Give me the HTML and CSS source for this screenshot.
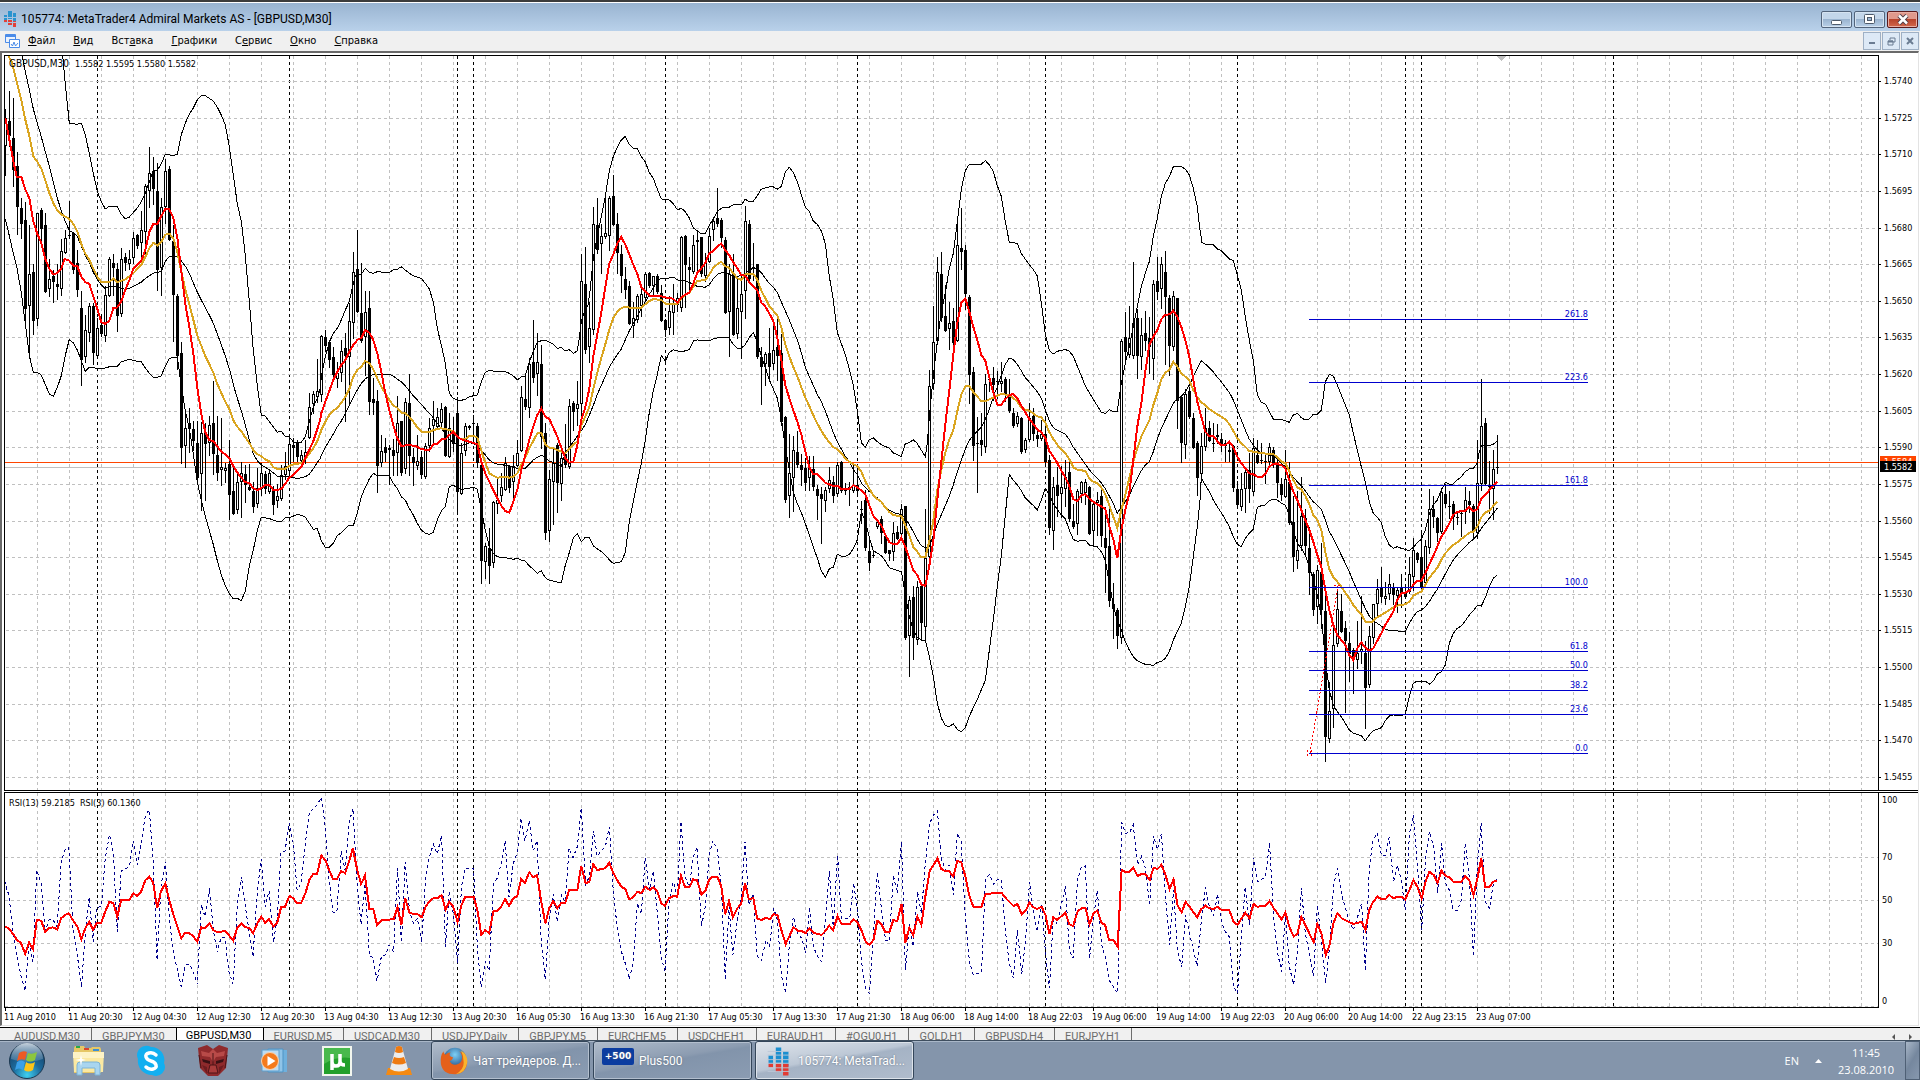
FILE: index.html
```html
<!DOCTYPE html>
<html lang="ru">
<head>
  <meta charset="UTF-8" />
  <meta name="viewport" content="width=device-width, initial-scale=1.0"/>
  <title>105774: MetaTrader4 Admiral Markets AS - [GBPUSD,M30]</title>
  <link rel="stylesheet" href="styles.css">
</head>
<body>
  <div class="window">
    <header class="titlebar">
      <svg class="app-icon" width="12" height="16" viewBox="0 0 12 16">
        <path fill="#2a93cf" d="M0 4h3v5H0zM4 0h4v8H4zM9 2h3v8H9z"/>
        <path fill="#e0413a" d="M0 9h3v2H0zM4 9h4v5H4zM9 10h3v6H9z"/>
        <path stroke="#a9c3df" d="M0 6.5h12M0 11.5h12"/>
      </svg>
      <h1 class="title">105774: MetaTrader4 Admiral Markets AS - [GBPUSD,M30]</h1>
      <div class="win-buttons">
        <button class="win-btn" aria-label="Свернуть">
          <svg width="11" height="11" viewBox="0 0 11 11"><rect x=".5" y="6.5" width="10" height="4" rx="1" fill="#fff" stroke="#4d5a6b"/></svg>
        </button>
        <button class="win-btn" aria-label="Развернуть">
          <svg width="11" height="11" viewBox="0 0 11 11"><rect x=".5" y=".5" width="10" height="9" rx="1" fill="#fff" stroke="#4d5a6b"/><rect x="3.5" y="3.5" width="4" height="3" fill="#9db8d5" stroke="#4d5a6b"/></svg>
        </button>
        <button class="win-btn close" aria-label="Закрыть">
          <svg width="12" height="11" viewBox="0 0 12 11"><path d="M2 1.500l8 8M10 1.500l-8 8" stroke="#4a3a45" stroke-width="4.500"/><path d="M2 1.500l8 8M10 1.500l-8 8" stroke="#fff" stroke-width="2.500"/></svg>
        </button>
      </div>
    </header>

    <nav class="menubar">
      <svg class="doc-icon" width="15" height="15" viewBox="0 0 15 15">
        <path d="M.5.5h10v8H.5z" fill="#eaf2fd" stroke="#4a8be8"/><path d="M1 2h9" stroke="#4a8be8" stroke-width="2"/>
        <path d="M4.500 5.500h10v8h-10z" fill="#fff" stroke="#4a8be8"/><path d="M6 10l1.500 2L9 8l1.500 4L13 9" fill="none" stroke="#4a8be8"/>
      </svg>
      <button class="menu"><u>Ф</u>айл</button>
      <button class="menu"><u>В</u>ид</button>
      <button class="menu">Вст<u>а</u>вка</button>
      <button class="menu"><u>Г</u>рафики</button>
      <button class="menu">С<u>е</u>рвис</button>
      <button class="menu"><u>О</u>кно</button>
      <button class="menu"><u>С</u>правка</button>
      <div class="mdi-buttons">
        <button class="mdi-btn" aria-label="Свернуть график"><svg width="8" height="8"><path d="M1 6h6" stroke="#6b7c92" stroke-width="2"/></svg></button>
        <button class="mdi-btn" aria-label="Восстановить график"><svg width="9" height="9"><path d="M3 3V1h5v4H6M1 4h5v4H1z" fill="none" stroke="#6b7c92"/><path d="M1 4.500h5" stroke="#6b7c92" stroke-width="2"/></svg></button>
        <button class="mdi-btn" aria-label="Закрыть график"><svg width="8" height="8"><path d="M1 1l6 6M7 1L1 7" stroke="#6b7c92" stroke-width="2"/></svg></button>
      </div>
    </nav>

    <main class="chart">
      <svg class="price-pane" id="pricePane"></svg>
      <svg class="rsi-pane" id="rsiPane"></svg>
      <ul class="dates" id="dates"></ul>
    </main>

    <nav class="tabs">
      <button class="tab">AUDUSD,M30</button>
      <button class="tab last">GBPJPY,M30</button>
      <button class="tab active">GBPUSD,M30</button>
      <button class="tab">EURUSD,M5</button>
      <button class="tab">USDCAD,M30</button>
      <button class="tab">USDJPY,Daily</button>
      <button class="tab">GBPJPY,M5</button>
      <button class="tab">EURCHF,M5</button>
      <button class="tab">USDCHF,H1</button>
      <button class="tab">EURAUD,H1</button>
      <button class="tab">#OGU0,H1</button>
      <button class="tab">GOLD,H1</button>
      <button class="tab">GBPUSD,H4</button>
      <button class="tab">EURJPY,H1</button>
      <div class="tab-scroll">
        <button class="scroll-btn" aria-label="Назад"><svg width="4" height="6"><path d="M3 0v6L0 3z" fill="#555"/></svg></button>
        <button class="scroll-btn" aria-label="Вперёд"><svg width="4" height="6"><path d="M1 0v6l3-3z" fill="#555"/></svg></button>
      </div>
    </nav>
  </div>

  <footer class="taskbar">
    <button class="start" aria-label="Пуск">
      <svg width="38" height="38" viewBox="0 0 38 38">
        <defs>
          <radialGradient id="orb" cx=".5" cy=".9" r=".9"><stop offset="0" stop-color="#3fd0f0"/><stop offset=".45" stop-color="#1c6a9c"/><stop offset="1" stop-color="#173a5c"/></radialGradient>
          <linearGradient id="shine" x2="0" y2="1"><stop offset="0" stop-color="#e4edf5" stop-opacity=".85"/><stop offset="1" stop-color="#8fb0cc" stop-opacity=".25"/></linearGradient>
        </defs>
        <circle cx="19" cy="19" r="17.500" fill="url(#orb)" stroke="#1c3850"/>
        <path d="M3 17a16 16 0 0 1 32 0q-16 6-32 0z" fill="url(#shine)"/>
        <path d="M11 11q4-3 8-1l-2 8q-4-2-8 1z" fill="#ee5a24"/>
        <path d="M20 11q4 2 9-1l-2 8q-5 3-9 0z" fill="#8cc63e"/>
        <path d="M9 20q4-3 8 0l-2 8q-4-3-8 0z" fill="#3aa0e8"/>
        <path d="M18 20q4 3 9 0l-2 8q-5 3-9 0z" fill="#fcc419"/>
      </svg>
    </button>
    <button class="pin" aria-label="Проводник">
      <svg width="34" height="32" viewBox="0 0 34 32">
        <path d="M2 3l1-2h9l1 2h6l1-1h8l1 2v24H2z" fill="#e6c766"/>
        <path d="M4 1h4v2H4z" fill="#2aa84a"/><path d="M12 3h5v2h-5z" fill="#d8432e"/><path d="M21 4h6v2h-6z" fill="#3b8fd6"/>
        <path d="M1 7h31l-1 20H2z" fill="#fbe9a2"/><path d="M1 7h31v6H1z" fill="#fdf3c6"/>
        <path d="M5 30V20q0-3 3-3h17q3 0 3 3v10h-5v-7H10v7z" fill="#a9d5ef" stroke="#7cb3d6"/>
        <path d="M9 10l1 4 4 1-4 1-1 5-1-5-5-1 5-1z" fill="#fff"/>
      </svg>
    </button>
    <button class="pin" aria-label="Skype">
      <svg width="32" height="32" viewBox="0 0 32 32">
        <path d="M10 1a9 9 0 0 1 6 1A13 13 0 0 1 29 18a9 9 0 0 1-12 12A14 14 0 0 1 3 14 9 9 0 0 1 10 1z" fill="#12aff0"/>
        <path d="M21 10q-3-3-7-2t-3 4 5 4 5 4-3 4-7-2" fill="none" stroke="#fff" stroke-width="3.500" stroke-linecap="round"/>
      </svg>
    </button>
    <button class="pin" aria-label="Transformers">
      <svg width="32" height="34" viewBox="0 0 32 34">
        <path d="M1 4l9-3 6 4 6-4 9 3-2 20-8 8H11l-8-8z" fill="#8f2a2c"/>
        <path d="M4 7l8 2 4-4 4 4 8-2-1 5-8 1-3 5-3-5-8-1z" fill="#b84a48"/>
        <path d="M5 15l8 2v3l-7-2zM27 15l-8 2v3l7-2z" fill="#3b1114"/>
        <path d="M13 21h6l2 8H11zM2 11l2 13M30 11l-2 13M16 9v12" fill="#a93c3b" stroke="#4d1517"/>
        <path d="M5 21l5 2v7zM27 21l-5 2v7z" fill="#6d1d20"/>
      </svg>
    </button>
    <button class="pin" aria-label="Windows Media Player">
      <svg width="30" height="28" viewBox="0 0 30 28">
        <path d="M12 3h15v22H12z" fill="#6fb0dd"/><path d="M8 2h15v23H8z" fill="#8fc4e8" stroke="#4f93c4"/><path d="M2 3h17v21H2z" fill="#bddcf2" stroke="#5f9fcc"/>
        <circle cx="10" cy="14" r="8.500" fill="#f47a1c" stroke="#fbd3ad"/>
        <path d="M7.500 9l8 5-8 5z" fill="#fff"/>
      </svg>
    </button>
    <button class="pin" aria-label="uTorrent">
      <svg width="30" height="30" viewBox="0 0 30 30">
        <path d="M0 0h30v30H0z" fill="#f2f6ee"/><path d="M2 2h26v26H2z" fill="#22a02b"/><path d="M2 2h26v10Q15 10 2 18z" fill="#48b94c"/>
        <path d="M10 8v8q0 4 4 4t4-4V8M18 15q0 4 5 4M10 16v8" fill="none" stroke="#fff" stroke-width="3.500"/>
      </svg>
    </button>
    <button class="pin" aria-label="VLC">
      <svg width="28" height="32" viewBox="0 0 28 32">
        <path d="M3 23h22l2 7H1z" fill="#f58a12"/><path d="M11 2q3-2 6 0l6 22q-9 5-18 0z" fill="#ececec"/>
        <path d="M11 2q3-2 6 0l1 5q-4 2-8 0zM9 12q5 2 10 0l2 6q-7 3-14 0z" fill="#ee7a10"/>
      </svg>
    </button>

    <button class="task first">
      <svg width="34" height="34" viewBox="0 0 32 32">
        <defs><radialGradient id="globe" cx=".5" cy=".3" r=".7"><stop offset="0" stop-color="#7cd0f7"/><stop offset="1" stop-color="#12356f"/></radialGradient></defs>
        <circle cx="17" cy="14" r="13" fill="url(#globe)"/>
        <path d="M4 5q0 3 2 4 3-3 6-3-2 3 0 5l3 1q-1 3-4 4 2 5 8 4 5-1 6-6 1-5-3-9 8 3 9 12-1 13-14 14Q3 31 1 19 0 10 4 5z" fill="#e5601a"/>
        <path d="M24 4q8 5 7 14-2 12-13 13 9-5 9-13 0-8-3-14z" fill="#fbb32b"/>
      </svg>
      <span>Чат трейдеров. Д...</span>
    </button>
    <button class="task">
      <span class="plus500">+500</span>
      <span>Plus500</span>
    </button>
    <button class="task current">
      <svg width="34" height="34" viewBox="0 0 32 32">
        <path d="M5 10h5v9H5zM13 1h6v17h-6zM21 5h6v17h-6z" fill="#1b8fd0"/>
        <path d="M5 19h5v4H5zM13 19h6v9h-6zM21 19h6v13h-6z" fill="#e23b33"/>
        <path d="M4 14.500h24M4 18.500h24M4 23.500h24M4 9.500h24M4 5.500h24M4 27.500h24" stroke="#bcc7d6"/>
      </svg>
      <span>105774: MetaTrad...</span>
    </button>

    <div class="tray">
      <span class="lang">EN</span>
      <button class="tray-up" aria-label="Скрытые значки"><svg width="7" height="4"><path d="M0 4h7L3.500 0z" fill="#fff"/></svg></button>
      <time class="clock" datetime="2010-08-23T11:45"><span>11:45</span><span>23.08.2010</span></time>
      <button class="peek" aria-label="Показать рабочий стол"></button>
    </div>
  </footer>
  <script src="chart.js"></script>
</body>
</html>
```
FILE: styles.css
```css
* {
  box-sizing: border-box;
}
body {
  margin: 0;
  height: 100vh;
  display: flex;
  flex-direction: column;
  overflow: hidden;
  font-family: "DejaVu Sans Condensed", "DejaVu Sans", sans-serif;
  font-size: 11px;
  color: #000;
}
button {
  font: inherit;
  margin: 0;
  padding: 0;
  border: 0;
  background: none;
}
svg {
  display: block;
}

/* window frame */
.window {
  flex: 1;
  min-height: 0;
  display: flex;
  flex-direction: column;
  background: #fff;
  border-top: 2px solid #3c3c3c;
}
.titlebar {
  height: 29px;
  display: flex;
  align-items: center;
  gap: 5px;
  padding: 4px 2px 0 4px;
  border-top: 1px solid #fff;
  background: linear-gradient(#99b4d1, #b9d1ea);
}
.title {
  flex: 1;
  margin: 0;
  font-family: Roboto, "Noto Sans", sans-serif;
  font-size: 12px;
  font-weight: normal;
}
.win-buttons {
  display: flex;
  gap: 2px;
}
.win-btn {
  width: 31px;
  height: 17px;
  display: flex;
  align-items: center;
  justify-content: center;
  border: 1px solid #52647c;
  border-radius: 2px;
  background: linear-gradient(#c3d6ea 45%, #9ab4d0 50%, #b9d0e8);
  box-shadow: inset 0 0 0 1px #d5e3f1;
}
.win-btn.close {
  border-color: #5a1a1c;
  background: linear-gradient(#e0998c 45%, #b8442c 50%, #d2684d);
  box-shadow: inset 0 0 0 1px #e8aea4;
}
.menubar {
  height: 20px;
  display: flex;
  align-items: center;
  gap: 18px;
  padding: 0 1px 0 5px;
  background: #f0f0f0;
}
.doc-icon {
  margin-right: -10px;
}
.menu {
  line-height: 20px;
}
.mdi-buttons {
  display: flex;
  gap: 1px;
  margin-left: auto;
}
.mdi-btn {
  width: 18px;
  height: 18px;
  display: flex;
  align-items: center;
  justify-content: center;
  border: 1px solid #9fb0c4;
  background: #dde9f6;
}

/* chart */
.chart {
  flex: 1;
  min-height: 0;
  display: flex;
  flex-direction: column;
  margin-right: 1px;
  border-top: 2px solid #696969;
  border-left: 2px solid #696969;
  border-right: 1px solid #e3e3e3;
  border-bottom: 1px solid #e3e3e3;
}
.price-pane {
  flex: 1;
  min-height: 0;
  width: 100%;
}
.rsi-pane {
  flex: none;
  width: 100%;
  height: 220px;
}
.dates {
  display: flex;
  height: 14px;
  margin: 0;
  padding: 0 0 0 2px;
  list-style: none;
  overflow: hidden;
}
.dates li {
  flex: none;
  width: 64px;
  line-height: 12px;
  font-size: 9px;
  white-space: nowrap;
}
.chart text {
  font-size: 9px;
}
.chart .symbol {
  font-size: 10px;
}
.grid {
  stroke: #c0c0c0;
  stroke-dasharray: 3 3;
}
.day {
  stroke: #000;
  stroke-dasharray: 3 3;
}
.frame {
  stroke: #000;
}
.bid {
  stroke: #c0c0c0;
}
.ask {
  stroke: #ff4500;
}
.fibo {
  stroke: #0000cd;
}
.chart .fibo-label {
  fill: #0000cd;
  text-anchor: end;
}
.trend {
  stroke: #f00;
  stroke-dasharray: 2 2;
}
.band,
.fast,
.slow,
.rsi3,
.rsi13 {
  fill: none;
  stroke: #000;
}
.fast,
.rsi13 {
  stroke: #f00;
  stroke-width: 2;
}
.slow {
  stroke: #daa520;
  stroke-width: 2;
}
.rsi3 {
  stroke: #00008b;
  stroke-dasharray: 3 3;
}
.bull {
  fill: #fff;
  stroke: #000;
}
.ask-tag {
  fill: #ff4500;
}
.chart .tag-text {
  fill: #fff;
}
.shift {
  fill: #c0c0c0;
}

/* chart tabs */
.tabs {
  flex: none;
  height: 13px;
  display: flex;
  overflow: hidden;
  margin-top: 1px;
  padding-left: 4px;
  background: #f0f0f0;
  border-top: 1px solid #000;
}
.tab {
  height: 18px;
  padding: 0 11px 0 10px;
  color: #6d6d6d;
  font-family: Roboto, "DejaVu Sans Condensed", sans-serif;
  line-height: 18px;
  border-right: 1px solid #6d6d6d;
}
.tab.last {
  border-right: 0;
}
.tab.active {
  margin-top: -1px;
  padding: 0 11px 0 9px;
  color: #000;
  background: #fff;
  border-left: 1px solid #000;
  border-right: 1px solid #000;
}
.tab-scroll {
  display: flex;
  gap: 12px;
  margin-left: auto;
  padding: 6px 8px 0 0;
}
.scroll-btn {
  height: 6px;
}

/* taskbar */
.taskbar {
  flex: none;
  height: 40px;
  display: flex;
  align-items: center;
  padding-left: 8px;
  border-top: 1px solid #3f4f60;
  background: #8495ab;
  box-shadow: inset 0 1px #a9b7c8;
  color: #fff;
  font-family: "Open Sans", "Noto Sans", sans-serif;
}
.start {
  width: 50px;
}
.pin {
  width: 62px;
  display: flex;
  justify-content: center;
}
.task {
  width: 159px;
  height: 39px;
  margin-right: 3px;
  padding: 0 8px;
  display: flex;
  align-items: center;
  gap: 5px;
  color: #fff;
  font-family: Roboto, "Noto Sans", sans-serif;
  font-size: 12px;
  white-space: nowrap;
  border: 1px solid #34465a;
  border-radius: 3px;
  background: linear-gradient(170deg, #b0bccb, #8c9cb1 45%, #8294ab 50%, #8b9cb2);
  box-shadow: inset 0 0 0 1px #b3bfce;
}
.task.first {
  margin-left: 1px;
}
.task.current {
  background: linear-gradient(170deg, #dfe5ec, #bcc7d5 45%, #a5b3c5 50%, #b0bccc);
  box-shadow: inset 0 0 0 1px #dde3ea;
}
.task span {
  text-shadow: 0 0 2px #5d6b7d;
}
.task .plus500 {
  width: 32px;
  height: 17px;
  margin-top: -8px;
  border-radius: 2px;
  background: #0b3ca0;
  font: bold 9px/16px "DejaVu Sans", sans-serif;
  text-align: center;
}
.tray {
  height: 100%;
  margin-left: auto;
  display: flex;
  align-items: center;
  font-size: 11px;
}
.lang {
  margin-right: 16px;
}
.tray-up {
  margin-right: 17px;
}
.clock {
  width: 54px;
  display: flex;
  flex-direction: column;
  align-items: center;
  line-height: 17px;
  margin-right: 12px;
}
.peek {
  width: 15px;
  height: 100%;
  border: 1px solid #4f6075;
  background: linear-gradient(120deg, #a9b7c8, #75879e 50%, #8798ae);
}
```
FILE: chart.js
```js
// Quotes are packed in blocks. Every block has its own origin and scale:
// screen y = y + value / sy, screen x = x + value / sx.
// A bar is "high open close low"; one bar takes 4px.
const BAR = 4;
const FIRST_BAR = 5;
const ORIGIN_X = 2;
const ORIGIN_Y = 53;
const RSI_Y = 791;

const blocks = [
  {
    x: 0, y: 50, sx: 3, sy: 2.8,
    bars: `165 270 190 350,115 200 240 270,135 245 335 382,285 325 440 515,415 443 487 525,425 475 725 770,490 718 628 860,
      600 622 758 795,455 752 457 770,443 448 500 540,455 490 677 677,585 670 642 690,615 633 650 705,600 655 663 697,
      530 670 562 685,505 567 525 567,423 517 520 527,510 512 615 625,560 595 672 690,675 722 868 937,742 860 785 873,
      708 793 717 815,708 717 848 880,750 857 778 857,738 770 795 800,660 800 685 815,580 690 585 690,570 595 610 685,
      595 612 745 787,553 738 585 745,568 580 595 615,560 600 585 612,510 582 525 595,515 518 548 553,450 540 505 585,
      375 510 380 580,272 395 345 440,300 340 388 430,315 395 615 672,415 610 440 685,305 440 340 485,325 333 533 533,
      490 535 685 815,683 690 858 893,818 847 1113 1155,1010 1108 1058 1168,1003 1045 1060 1125,1040 1062 1095 1120,
      1040 1100 1197 1215,1042 1187 1073 1287,1045 1073 1102 1260,1025 1100 1050 1135,928 1045 1130 1187,1025 1135 1183 1203,
      1030 1175 1168 1217,1155 1180 1170 1210,1092 1160 1245 1312,1158 1235 1298 1300,1185 1287 1210 1295,1153 1210 1185 1307,
      1163 1188 1217 1265,1160 1223 1232 1233,1210 1235 1280 1293,1170 1272 1225 1280,1155 1230 1183 1245,1178 1187 1230 1240,
      1175 1237 1185 1240,1220 1235 1273 1298,1215 1263 1248 1280,1162 1258 1190 1260,1125 1190 1165 1200,1075 1180 1102 1190,
      1085 1105 1113 1150,1092 1098 1140 1150,1120 1150 1135 1158`,
    upper: `188,15 196,95 208,205 232,208 244,205 256,237 268,290 280,345 292,395 304,425 316,445 328,438 352,438 364,460 376,473 388,468 400,455 412,442 424,425 436,400 448,370 460,338 472,337 484,318 496,292 520,295 532,292 544,237 556,205 568,180 580,162 592,140 604,127 616,128 640,143 652,160 664,182 676,210 688,270 700,350 712,430 724,480 736,575 748,705 760,840 772,940 784,1022 796,1025 808,1040 820,1055 832,1070 844,1068 856,1082 868,1083 880,1097 892,1100 904,1098 916,1083 928,1040 940,1000 952,975 960,950`,
    mid: `66,15 76,60 88,110 100,165 112,205 124,243 136,285 148,325 160,370 172,415 184,450 196,480 208,505 220,512 232,522 244,548 256,575 268,595 280,622 292,643 304,658 316,668 328,662 352,663 376,670 388,667 400,662 424,650 436,640 460,625 484,620 496,592 508,578 532,578 544,590 556,605 568,625 580,652 592,678 604,700 616,722 628,742 640,765 652,795 664,825 676,857 688,892 700,937 712,975 724,1010 736,1050 748,1092 760,1130 772,1150 784,1162 808,1175 832,1193 868,1195 892,1200 916,1195 928,1188 940,1173 952,1155 960,1145`,
    lower: `16,473 28,520 40,570 52,615 64,680 76,765 88,855 100,903 112,903 124,910 136,937 148,963 160,970 172,945 184,912 196,855 208,810 220,820 232,840 244,870 256,900 268,888 304,893 328,887 352,886 364,873 388,866 412,872 424,873 436,890 448,905 460,916 472,917 484,912 496,885 508,863 532,860 538,900 544,940 556,1010 568,1060 580,1130 592,1210 604,1260 616,1305 628,1345 640,1385 652,1430 664,1470 676,1500 688,1522 700,1537 712,1535 724,1542 736,1515 748,1445 760,1400 772,1345 784,1308 808,1312 832,1320 844,1320 856,1310 868,1310 892,1300 904,1303 916,1308 928,1325 940,1342 952,1340 960,1362`,
    slow: `25,15 36,35 50,90 64,140 76,195 88,240 100,298 112,313 124,332 136,365 148,400 160,428 172,450 184,460 208,473 220,487 232,508 244,543 256,570 268,588 280,612 292,635 304,650 328,650 340,640 352,650 376,642 400,625 424,602 436,580 448,555 460,540 472,547 484,537 496,517 508,514 520,527 532,565 544,620 556,670 568,712 580,755 592,800 604,828 616,857 628,880 640,903 652,935 664,960 676,985 688,1005 700,1037 712,1055 724,1067 736,1085 748,1100 760,1120 772,1132 784,1137 796,1147 808,1152 820,1168 832,1173 856,1172 868,1165 880,1160 904,1157 916,1145 928,1130 940,1115 952,1095 960,1075`,
    fast: `16,190 28,250 40,310 50,355 64,355 76,390 88,415 100,480 112,515 124,540 136,585 148,612 160,628 172,625 184,612 194,585 208,590 220,604 232,605 244,635 256,650 268,655 280,690 292,725 304,762 316,767 328,758 340,723 352,721 364,703 376,672 388,645 400,613 412,600 424,590 436,560 448,510 460,487 472,487 484,465 496,445 508,446 520,470 532,525 544,620 556,710 568,775 580,850 592,945 604,1020 616,1070 628,1092 640,1095 652,1110 664,1125 676,1132 688,1142 700,1165 712,1183 724,1197 736,1210 748,1213 760,1227 772,1232 784,1227 796,1217 808,1218 820,1232 832,1232 844,1228 856,1215 868,1197 880,1190 892,1178 904,1168 916,1142 928,1120 940,1095 952,1062 960,1037`
  },
  {
    x: 300, y: 180, sx: 3, sy: 3,
    bars: `780 835 815 850,640 775 680 775,632 672 642 700,538 652 632 665,465 645 467 663,450 470 497 512,480 487 540 560,
      500 530 585 600,545 598 580 620,480 578 512 603,458 503 527 722,370 532 422 672,215 430 277 475,150 268 395 395,
      250 400 482 487,333 472 395 585,333 385 665 702,595 657 670 702,630 663 857 935,765 848 812 857,773 802 818 842,
      795 811 803 913,778 810 827 885,648 818 730 885,722 723 880 885,655 868 665 880,582 670 827 885,805 832 848 915,
      765 857 842 868,812 832 885 893,790 892 798 893,715 797 745 812,663 737 718 790,685 740 712 745,668 730 687 742,
      678 680 827 827,700 832 745 832,712 752 792 812,652 700 935 1000,790 943 818 943,730 812 737 825,735 745 737 747,
      705 730 732 790,730 737 848 860,848 855 1142 1208,1090 1147 1097 1195,1045 1105 1157 1208,963 1148 965 1160,
      895 973 960 1000,878 948 922 963,830 930 848 930,855 857 923 937,825 907 857 955,780 857 818 857,618 812 650 812,
      585 658 680 687,535 685 553 710,420 547 593 605,458 583 547 645,495 552 770 803,728 760 1060 1077,870 1053 898 1083,
      800 907 850 1032,788 795 908 997,795 912 835 960`,
    upper: `64,590 76,530 88,487 100,460 112,445 124,420 136,390 148,365 160,310 166,288 184,283 196,265 208,277 220,280 232,275 256,277 268,277 280,270 292,268 304,260 316,270 328,280 340,287 364,295 376,310 388,327 400,365 412,445 424,495 436,550 448,640 460,655 472,660 484,661 496,658 508,650 532,645 544,605 556,577 568,571 580,573 604,575 616,575 628,580 640,588 652,600 664,590 676,588 688,545 700,515 712,487 724,482 736,480 748,487 760,493 772,505 784,503`,
    mid: `64,827 76,802 88,782 100,762 112,740 124,723 136,700 148,677 160,652 172,630 184,610 196,597 208,588 220,583 268,583 280,588 292,598 304,605 316,618 328,632 340,648 352,660 364,673 376,687 388,700 400,713 412,730 424,745 436,760 448,778 460,787 472,793 484,797 496,793 508,788 520,790 532,797 544,810 556,825 568,840 580,848 592,852 616,856 628,858 640,862 652,865 676,865 688,853 700,840 712,832 724,826 736,832 748,843 772,853 784,858`,
    lower: `64,1082 76,1102 88,1102 100,1090 112,1067 124,1058 136,1047 148,1035 160,1037 172,1000 184,950 196,922 208,897 220,880 232,887 268,887 280,910 292,925 304,950 316,960 328,985 340,1005 352,1030 364,1050 376,1060 388,1063 400,1057 412,1020 424,993 436,980 448,920 460,915 472,925 484,928 508,925 520,921 532,928 540,970 556,1050 568,1100 580,1120 592,1130 604,1132 628,1135 640,1138 652,1135 664,1140 676,1143 688,1158 700,1167 712,1180 724,1172 736,1193 748,1201 772,1206 784,1208`,
    slow: `64,750 76,725 88,705 100,692 112,683 124,668 136,650 148,628 160,590 172,570 184,560 196,543 208,550 220,568 232,595 244,620 256,640 268,660 280,677 292,683 304,698 316,700 328,710 340,725 352,742 364,755 388,757 400,750 424,745 448,750 460,753 472,770 484,778 496,777 508,768 520,767 532,773 544,812 556,848 568,880 580,887 592,893 604,892 616,890 628,893 640,890 652,880 664,855 676,833 688,805 700,783 712,760 724,758 736,793 748,803 760,805 784,815`,
    fast: `64,700 76,665 88,633 100,600 112,575 124,555 136,540 148,515 160,495 172,480 184,473 196,450 208,458 220,480 232,520 244,575 256,640 268,690 280,735 292,775 304,798 328,795 352,800 364,808 388,810 400,793 412,793 424,778 436,778 448,765 460,755 472,770 484,778 496,782 508,785 532,793 544,845 556,880 568,905 580,930 592,955 604,977 616,993 628,998 640,965 652,930 664,870 676,825 688,780 700,740 712,705 724,685 736,710 748,717 760,743 772,770 784,803`
  },
  {
    x: 560, y: 120, sx: 3, sy: 2.751,
    bars: `835 920 950 955,768 955 788 957,773 778 802 853,718 795 780 840,370 780 443 830,350 452 633 640,500 625 573 667,
      238 578 285 590,215 290 358 365,285 340 318 420,210 322 310 325,210 318 215 358,150 210 290 290,257 285 365 420,
      345 370 430 472,405 437 467 490,443 458 560 560,500 567 545 598,478 550 485 555,465 512 480 538,418 490 425 495,
      418 420 457 460,428 457 430 480,425 430 472 475,455 475 552 553,548 550 578 595,485 573 525 588,450 530 505 588,
      475 510 490 525,318 518 322 525,317 318 398 515,378 405 412 472,315 418 345 420,302 335 330 423,322 323 425 430,
      365 430 390 443,298 390 318 392,270 303 277 330,188 270 287 292,270 275 325 350,323 330 532 532,395 527 425 648,
      370 425 592 592,430 590 518 600,430 527 480 655,237 470 277 545,275 285 438 440,337 405 410 440,395 397 653 655,
      625 653 680 780,638 672 645 728,573 640 680 712,550 672 632 685,540 625 648 715,590 640 830 840,815 817 1045 1050,
      865 1035 970 1092,870 985 908 1077,855 912 950 955,920 950 962 1003,930 957 998 1018,925 985 957 1018,925 960 1010 1018,
      1005 1015 1035 1098,1010 1030 1042 1165,1010 1048 1018 1077,955 1015 990 1022,980 995 1035 1050,940 1030 950 1035,
      937 940 1020 1022,998 1015 1020 1030,995 1010 1018 1058,950 1020 1003 1022,950 1005 1020 1030`,
    upper: `16,635 28,632 40,642 52,635 58,600 64,555 76,520 84,510 90,470 100,380 112,320 124,265 136,210 148,140 160,100 172,75 184,55 196,45 208,67 220,77 232,79 244,100 256,115 268,145 280,160 292,190 304,217 328,220 340,230 352,247 364,243 376,252 388,270 400,297 412,305 424,313 436,312 448,290 460,272 472,252 484,243 496,240 508,240 520,233 544,233 556,218 568,225 580,223 592,208 604,190 628,184 640,184 652,190 664,183 676,143 688,130 700,145 712,170 724,205 736,240 748,252 760,278 772,287 784,305 796,340 808,430 820,495 832,585 844,615 856,645 868,685 880,730 892,800`,
    mid: `16,915 28,900 40,885 52,870 64,855 76,838 88,812 100,785 112,755 124,730 136,705 148,680 160,662 172,645 184,630 196,605 208,580 220,560 232,540 244,520 256,500 268,480 280,462 292,445 304,435 316,437 340,432 352,440 376,443 388,447 400,452 412,458 436,460 448,453 460,437 472,425 484,420 508,422 520,432 532,430 544,428 556,422 568,412 580,408 592,410 604,420 616,435 628,450 640,460 652,475 664,500 676,525 688,550 700,578 712,605 724,640 736,680 748,705 760,730 772,755 784,775 796,800 808,830 820,860 832,885 844,905 856,925 868,940 880,962 892,975`,
    lower: `16,1225 28,1190 40,1150 52,1138 64,1160 76,1148 88,1148 100,1172 112,1180 124,1187 136,1197 148,1210 160,1220 184,1215 196,1190 208,1105 220,1050 232,995 244,945 256,880 268,805 280,745 292,700 304,648 316,663 328,640 340,632 352,635 364,638 388,632 400,608 412,605 448,608 460,602 484,597 508,600 520,618 532,628 544,628 556,618 568,598 580,585 592,610 604,650 616,680 628,715 640,740 652,765 664,820 676,900 688,960 700,1025 712,1055 724,1080 736,1110 748,1142 760,1175 772,1205 784,1240 796,1258 808,1235 820,1230 832,1195 844,1200 856,1200 868,1195 880,1180 892,1155`,
    slow: `16,917 28,905 40,893 52,885 64,840 76,815 88,790 100,740 112,695 124,655 136,617 148,577 160,545 172,527 184,518 196,513 208,516 244,516 256,507 268,498 280,493 304,495 316,505 352,507 364,490 376,481 388,475 400,458 412,443 436,440 448,425 460,407 472,397 484,390 496,402 508,407 520,422 532,435 544,440 556,425 568,423 580,423 592,440 604,470 616,490 628,512 640,525 652,537 664,570 676,617 688,650 700,680 712,705 724,735 736,763 748,787 760,812 772,835 784,855 796,872 808,887 820,900 832,905 844,917 856,930 868,940 880,947 892,952`,
    fast: `16,930 28,943 40,940 52,895 64,825 76,790 88,740 100,650 112,590 124,530 136,460 148,395 160,370 172,340 184,322 196,343 208,370 220,398 232,423 244,460 256,472 268,483 304,485 316,488 340,492 352,503 364,488 376,480 388,475 400,450 412,420 424,408 436,393 448,367 460,360 472,348 484,340 496,358 508,372 520,392 532,408 544,427 556,428 568,447 580,458 592,468 604,503 616,513 628,532 640,552 652,600 664,660 676,730 688,765 700,798 712,830 724,865 736,912 748,955 760,975 772,975 784,985 796,998 820,1007 832,1006 844,1015 868,1015 880,1005 892,1010`
  },
  {
    x: 860, y: 150, sx: 3, sy: 2.658,
    bars: `932 955 956 992,905 930 1058 1062,1035 1065 1097 1117,1063 1077 1078 1083,985 1003 990 1005,973 980 1018 1045,
      1025 1027 1070 1072,1062 1064 1075 1090,990 1068 1018 1090,1000 1015 1033 1035,940 1020 955 1030,945 947 1298 1300,
      1185 1293 1195 1397,1160 1187 1298 1352,1145 1303 1162 1312,1155 1160 1258 1302,955 1267 1085 1303,585 1082 628 1082,
      415 623 510 635,285 507 325 515,270 330 447 455,360 440 480 480,403 475 460 530,420 455 512 530,190 507 253 507,
      153 260 272 315,253 267 383 422,385 390 597 672,577 590 787 825,710 778 780 908,698 772 785 812,595 790 622 803,
      598 612 610 640,577 605 625 665,587 614 616 660,563 623 615 640,603 610 650 668,610 650 695 697,685 700 733 735,
      697 727 708 733,710 712 803 805,765 798 770 803,672 770 712 773,685 708 755 772,748 757 768 788,718 767 755 770,
      715 755 830 832,812 825 1005 1022,870 1013 897 1060,843 890 920 972,840 915 897 975,825 902 870 945,828 857 980 985,
      940 985 1002 1005,900 993 907 1020,880 915 883 935,875 912 883 940,893 897 1020 1022,933 1013 942 1048,910 937 930 1023,
      905 920 1025 1052,950 1032 1058 1175,955 1052 1200 1213,1152 1208 1220 1298,1218 1222 1292 1325`,
    upper: `4,778 16,790 28,770 40,765 52,775 64,783 88,793 100,805 112,810 124,815 136,780 148,778 160,770 172,780 184,798 196,815 202,780 208,710 220,600 232,510 244,430 256,380 268,315 280,275 292,190 304,105 316,55 328,38 364,38 376,28 388,40 400,57 412,95 424,123 436,190 448,245 472,248 484,275 496,290 508,305 520,318 532,335 544,405 556,490 568,533 580,542 592,535 616,530 628,535 640,548 652,575 664,600 676,627 688,645 700,663 712,680 724,697 736,700 748,690 760,695 772,694`,
    mid: `4,885 16,897 28,908 40,915 52,925 64,937 76,948 88,957 100,963 112,967 124,968 136,980 148,995 160,1015 172,1035 184,1052 196,1057 208,1055 220,1025 232,995 244,970 256,945 268,920 280,890 292,855 304,825 316,795 328,772 340,758 352,748 364,737 376,715 388,690 400,655 412,630 424,600 436,570 448,553 460,557 472,570 484,587 496,605 508,617 520,630 532,643 544,660 556,690 568,720 580,738 592,745 616,755 628,770 640,790 652,805 664,820 676,835 688,850 700,862 712,872 724,885 736,900 748,920 760,940 772,965`,
    lower: `4,962 16,985 28,1030 40,1065 64,1078 76,1092 88,1110 112,1118 124,1120 136,1180 148,1240 160,1275 172,1295 184,1303 196,1303 208,1345 220,1400 232,1470 244,1510 256,1530 268,1533 280,1525 292,1540 304,1547 316,1535 328,1505 352,1460 364,1435 376,1410 388,1330 400,1250 412,1160 424,1080 436,970 448,862 460,878 472,890 484,905 496,925 508,935 520,945 532,957 544,930 556,900 568,915 580,940 592,955 604,970 616,980 628,1010 640,1035 652,1040 676,1037 688,1050 712,1055 724,1068 736,1090 748,1150 760,1210 772,1250`,
    slow: `4,855 16,880 28,900 40,918 52,928 64,935 76,950 88,962 100,970 112,972 124,972 136,998 148,1025 160,1055 172,1068 184,1083 196,1083 208,1040 220,985 232,905 244,850 256,805 268,770 280,745 292,695 304,650 316,628 328,628 340,643 352,655 364,668 376,668 388,663 412,653 424,648 436,650 448,652 460,660 472,668 484,685 496,690 508,693 532,708 544,710 556,725 568,750 580,768 592,783 604,797 616,805 628,822 640,843 652,850 676,853 688,873 700,882 712,885 724,897 736,915 748,945 760,975 772,1005`,
    fast: `4,905 16,915 28,945 40,972 52,985 64,998 76,1022 88,1042 100,1048 112,1048 124,1030 136,1055 148,1085 160,1117 172,1130 184,1155 196,1158 208,1105 220,1040 232,930 244,830 256,730 268,640 280,545 292,460 304,407 316,395 328,430 340,470 352,505 364,545 376,560 388,605 400,645 412,677 424,677 436,662 448,652 460,648 472,660 484,680 496,697 508,715 520,728 532,743 544,750 556,765 568,800 580,815 592,832 604,852 616,870 628,893 640,928 652,933 664,918 676,915 688,927 700,935 712,942 724,947 736,955 748,1000 760,1035 772,1085`
  },
  {
    x: 1120, y: 150, sx: 3, sy: 3,
    bars: `568 1465 572 1478,485 562 607 635,468 615 565 620,337 618 520 625,478 505 617 683,505 622 555 658,483 550 572 600,
      500 563 590 668,390 628 403 688,322 393 425 448,322 418 343 475,302 367 440 643,435 443 587 675,422 592 438 600,
      443 445 753 835,735 740 880 937,718 885 733 923,710 723 800 805,790 805 893 893,872 880 983 1035,850 972 887 990,
      773 890 833 900,812 835 872 873,820 878 880 903,823 862 855 880,850 867 887 903,870 880 887 933,880 907 900 933,
      885 887 1013 1022,993 1017 1065 1075,970 1070 1017 1080,955 1018 967 1085,910 960 1018 1055,865 1025 895 1035,
      870 915 938 940,880 930 933 938,910 937 932 1000,880 937 890 952,890 900 938 950,930 940 998 1040`,
    upper: `4,700 16,640 28,590 40,530 52,470 64,410 76,370 88,335 100,260 112,205 124,140 136,100 148,80 160,50 184,50 196,57 208,75 220,115 232,170 240,240 246,278 256,283 280,284 292,297 304,302 316,315 328,327 340,332 352,375 364,420 376,500 388,570 400,630 412,735 424,757 436,762 448,785 460,807 472,810`,
    mid: `4,1072 16,1055 28,1035 40,1010 52,985 64,962 76,945 88,935 100,905 112,868 124,835 136,810 148,785 160,760 172,745 184,740 196,725 208,705 220,680 232,655 244,632 256,642 268,653 280,665 292,682 304,695 316,712 328,727 340,750 352,780 364,810 376,840 388,868 400,885 412,900 424,910 448,915 460,918 472,928`,
    lower: `4,1440 16,1475 28,1500 40,1520 52,1532 64,1538 76,1543 100,1546 112,1537 124,1535 136,1525 148,1505 160,1470 172,1445 184,1420 196,1370 208,1310 220,1220 232,1130 240,1050 244,983 256,1005 268,1025 280,1050 292,1070 304,1088 316,1108 328,1130 340,1160 352,1183 364,1190 376,1165 388,1150 400,1138 412,1072 424,1067 436,1065 448,1052 460,1048 472,1050`,
    slow: `4,1080 16,1035 28,985 40,935 52,895 64,860 76,835 88,812 100,765 112,730 124,688 136,668 148,660 160,635 172,650 184,670 196,680 208,692 220,720 232,742 244,757 256,765 268,777 292,793 304,800 316,808 328,822 340,843 352,865 364,880 376,890 388,903 412,907 424,910 460,912 472,922`,
    fast: `4,1140 16,1080 28,1030 40,930 52,830 64,760 76,665 88,585 100,560 112,540 124,508 136,495 148,493 160,482 172,500 184,530 196,570 208,620 220,690 232,755 244,800 256,845 268,858 280,858 292,873 304,885 316,885 328,875 340,892 352,920 364,940 376,955 388,970 400,973 412,980 424,982 436,972 448,950 460,942 472,942`
  },
  {
    x: 1280, y: 300, sx: 3, sy: 3,
    bars: `533 552 585 600,450 590 538 590,487 545 670 672,588 665 772 812,572 782 750 803,530 737 648 750,628 655 737 765,
      680 745 820 883,815 823 930 945,795 920 810 970,728 815 930 985,860 933 1310 1383,1145 1317 1233 1325,978 1228 1035 1280,
      868 1033 928 1037,883 933 995 997,963 985 1022 1235,997 1030 1062 1143,1045 1050 1075 1178,963 1080 1060 1105,
      888 1055 1048 1088,1022 1060 1163 1285,978 1155 1008 1162,912 1015 913 1030,838 912 867 945,802 863 890 905,
      845 898 888 912,822 883 852 898,850 862 885 913,862 887 870 935,823 865 880 920,862 878 890 893,770 875 823 880,
      715 832 750 870,757 758 780 785,700 770 862 875,720 848 738 850,567 743 628 760,588 628 650 680,652 655 700 723,
      570 695 575 700,552 583 613 620,573 618 620 655,602 613 650 687,640 655 650 672,635 638 640 708,562 635 600 670,
      573 603 615 635,613 617 695 717,420 700 548 715,237 552 377 570,353 370 552 555,483 555 562 640,450 568 508 657,
      405 500 502 518`,
    upper: `4,358 28,367 40,345 52,340 64,353 76,360 88,357 100,343 112,343 124,330 130,290 136,245 148,223 160,228 172,255 184,285 196,315 208,345 220,400 232,450 244,500 256,545 268,605 280,640 292,652 304,668 316,710 328,735 340,745 352,740 364,745 388,752 400,742 412,728 424,718 436,690 448,640 460,615 472,600 484,570 496,547 508,553 520,552 532,540 544,530 556,515 568,507 580,505 592,490 598,455 604,438 628,437 640,433 652,423`,
    mid: `4,490 16,500 28,515 40,532 52,545 64,557 76,572 88,590 100,605 112,615 124,628 136,660 148,695 160,715 172,740 184,765 196,790 208,815 220,845 232,872 244,900 256,925 268,948 280,962 292,970 304,978 316,987 328,992 376,994 388,970 400,950 412,935 424,930 436,920 448,905 460,885 472,868 484,845 496,822 508,800 520,780 532,765 544,752 556,740 568,727 580,718 592,705 604,685 616,670 628,655 640,640 652,625`,
    lower: `4,610 16,615 28,645 40,690 52,730 64,745 76,765 88,800 100,840 112,885 124,950 130,1010 136,1080 148,1170 160,1215 172,1235 184,1250 196,1270 208,1290 220,1300 244,1307 256,1322 268,1305 280,1292 304,1283 316,1262 328,1248 340,1245 364,1246 376,1243 388,1190 400,1150 412,1143 436,1143 448,1153 460,1143 472,1122 484,1115 496,1095 508,1030 520,1000 532,985 544,978 556,962 568,945 580,932 592,917 604,918 616,893 628,860 640,835 652,825`,
    slow: `4,485 16,490 28,513 40,540 52,562 64,568 76,587 88,613 100,645 112,660 124,690 136,755 148,808 160,832 172,845 184,860 196,878 208,895 220,915 232,930 244,943 256,965 276,965 292,952 304,945 328,930 340,922 352,917 376,913 388,905 400,887 412,880 424,875 436,855 448,833 460,818 472,803 484,780 496,760 508,747 520,735 532,727 544,717 556,708 568,698 580,695 592,680 604,652 616,638 628,632 640,618 652,606`,
    fast: `4,495 16,505 28,540 40,575 52,600 64,630 76,660 88,690 100,725 112,765 124,800 136,870 148,930 160,975 172,1005 184,1020 196,1035 208,1065 220,1080 232,1045 244,1027 256,1043 268,1052 280,1045 292,1022 304,1000 316,975 328,955 340,935 352,900 364,880 376,878 388,872 400,855 412,842 424,842 436,820 448,793 460,768 472,740 484,710 496,693 508,670 520,645 532,635 556,633 568,621 580,633 592,628 604,597 616,585 628,570 640,557 652,545`
  }
];

const rsiBlocks = [
  {
    x: 0, y: 790, sx: 2.063, sy: 3,
    rsi13: `10,410 18,415 27,432 35,450 43,458 52,492 60,457 68,478 76,390 85,392 93,425 101,415 109,412 118,418 126,385 134,375 142,370 151,392 159,408 168,447 176,415 184,395 192,420 200,398 209,398 217,365 226,335 234,340 242,380 250,330 267,330 275,310 283,318 291,305 300,270 308,260 316,278 324,355 332,305 341,280 349,330 357,370 366,410 374,445 382,428 390,430 398,437 407,455 415,412 423,415 432,400 440,420 448,427 464,423 472,435 481,452 490,412 498,400 506,412 514,413 522,430 531,400 539,380 547,398 555,387 564,410 572,397 580,352 588,350 597,318 605,325 613,340 621,340 630,310 638,270 646,252 654,252 663,197 671,210 679,240 687,267 695,267 704,243 712,250 720,215 728,175 737,240 745,282 753,257 762,357 770,357 778,405 787,390 812,388 820,352 828,405 836,325 845,370 861,372 870,382 878,350 886,333 894,325 902,325 911,315 919,360 927,335 935,350 944,395 952,345 960,320 977,320 985,362 993,435 1001,420 1009,430 1018,362 1026,362 1034,350 1042,327 1050,348 1059,325 1067,318 1075,268 1083,278 1092,247 1100,262 1108,255 1116,330 1125,400 1133,355 1141,333 1150,355 1158,338 1166,340 1174,300 1191,300 1199,228 1208,280 1216,275 1224,223 1232,240 1249,235 1257,218 1265,248 1273,270 1282,290 1290,297 1298,328 1306,322 1315,305 1323,310 1331,290 1340,300 1348,292 1356,305 1364,340 1372,348 1380,325 1389,318 1397,320 1405,257 1413,290 1422,292 1430,268 1438,270 1447,313 1455,303 1463,268 1471,260 1480,260 1488,290 1496,373 1504,333 1512,382 1521,355 1529,342 1537,280 1545,328 1554,325 1562,385`,
    rsi3: `10,272 14,300 18,312 27,425 35,500 43,555 52,603 60,455 68,515 76,240 85,280 93,425 101,390 109,388 118,412 126,215 134,180 142,172 151,425 159,490 168,592 176,430 184,322 192,455 200,352 209,350 217,205 226,133 234,190 242,425 250,243 267,230 275,152 283,225 291,162 300,75 308,60 316,210 324,510 332,290 341,215 349,380 357,480 366,540 374,590 382,525 390,523 398,540 407,583 415,343 423,380 432,295 440,420 448,487 456,443 464,443 472,545 481,583 490,330 498,260 506,350 522,500 531,300 539,208 547,352 555,303 564,457 572,385 580,185 588,183 597,98 605,160 613,300 621,280 630,160 638,68 654,45 663,22 671,110 679,270 687,367 695,365 704,183 712,240 720,100 728,55 737,290 745,402 753,280 762,497 770,503 778,573 787,497 795,495 803,465 812,485 820,235 828,457 836,217 845,365 853,400 861,385 870,457 878,265 886,200 894,163 902,192 911,137 919,470 927,303 935,370 944,520 952,290 960,235 977,235 985,480 993,590 1001,515 1009,542 1018,280 1026,265 1034,220 1042,152 1050,322 1059,220 1067,190 1075,85 1083,152 1092,92 1100,182 1108,152 1116,440 1125,568 1133,385 1141,312 1150,395 1158,315 1166,335 1174,175 1182,203 1191,170 1199,55 1208,283 1216,260 1224,122 1232,198 1241,182 1249,170 1257,110 1265,300 1273,410 1282,485 1290,520 1298,568 1306,520 1315,340 1323,372 1331,203 1340,300 1348,243 1356,370 1364,500 1372,545 1380,340 1389,275 1397,320 1405,95 1413,260 1422,292 1430,200 1438,172 1447,410 1455,350 1463,195 1471,152 1480,180 1488,290 1496,570 1504,350 1512,495 1521,390 1529,320 1537,155 1545,345 1554,312 1562,497`
  },
  {
    x: 760, y: 790, sx: 2.063, sy: 3,
    rsi13: `3,390 12,383 20,388 28,373 36,375 44,420 53,462 61,437 69,412 78,422 86,423 94,430 102,415 110,428 127,435 135,423 143,407 151,420 160,378 168,402 185,402 193,388 201,397 209,420 218,455 226,465 234,450 242,392 250,402 259,427 267,425 275,390 283,393 292,343 300,458 308,413 316,435 325,380 333,405 341,320 350,243 358,225 366,205 374,237 382,243 390,243 399,260 407,213 415,217 424,260 432,318 440,350 457,350 465,312 498,308 506,323 523,348 531,342 540,373 548,362 556,338 564,352 572,357 581,350 589,375 597,432 605,382 613,390 630,368 638,403 646,408 655,365 663,355 671,353 680,402 688,370 696,362 704,398 712,405 720,450 729,450 738,470 741,380 746,240 754,246 762,246 770,233 779,258 787,252 795,252 804,270 812,233 820,237 828,225 836,252 845,297 853,268 861,345 870,367 878,335 886,350 902,382 910,358 919,347 927,355 936,357 944,350 952,360 968,360 977,395 985,405 1001,368 1010,385 1018,342 1026,350 1043,347 1051,333 1060,355 1076,388 1084,367 1092,410 1101,440 1109,430 1117,380 1125,405 1142,457 1150,402 1158,430 1167,495 1175,465 1183,400 1191,370 1200,385 1224,402 1241,395 1249,420 1257,360 1265,335 1274,320 1282,328 1290,328 1298,315 1307,325 1315,320 1323,320 1331,328 1340,300 1348,270 1356,290 1365,325 1373,275 1381,245 1390,255 1398,278 1406,242 1414,258 1422,262 1430,275 1447,275 1455,258 1463,270 1472,315 1480,265 1488,205 1496,290 1505,290 1513,275 1521,272`,
    rsi3: `3,512 12,450 20,470 28,355 36,390 44,555 53,610 61,455 69,380 78,430 86,445 94,490 102,352 110,470 119,500 127,515 135,390 143,243 151,410 160,195 168,385 185,387 193,280 201,355 209,510 218,600 226,610 234,430 242,247 250,350 259,450 267,455 275,255 283,310 292,155 300,540 308,400 316,470 325,305 333,370 341,220 350,100 358,75 366,62 374,205 382,240 390,225 399,315 407,130 415,155 424,385 432,515 440,555 457,547 465,270 473,253 482,282 490,268 498,270 506,420 514,520 523,565 531,420 540,553 548,450 556,277 564,370 572,425 581,345 589,490 597,595 605,380 613,402 630,288 638,480 646,505 655,270 663,230 671,228 680,505 688,380 696,302 704,460 712,500 720,570 738,610 741,400 746,97 754,130 762,128 770,105 779,225 787,200 795,235 804,347 812,137 820,178 828,130 836,310 845,465 853,300 861,480 870,532 878,375 886,430 902,530 910,400 919,292 927,350 936,377 944,313 952,395 960,425 968,440 977,590 985,610 993,440 1001,292 1010,405 1018,203 1026,275 1043,260 1051,158 1060,390 1068,490 1076,545 1084,370 1092,530 1101,583 1109,480 1117,293 1125,430 1142,558 1150,345 1158,450 1167,580 1175,470 1183,290 1191,235 1200,315 1208,355 1216,395 1224,420 1232,385 1241,340 1249,542 1257,230 1265,150 1274,130 1282,195 1290,197 1298,142 1307,275 1315,228 1323,270 1331,360 1340,130 1348,75 1356,220 1365,420 1373,210 1381,125 1390,170 1398,310 1406,160 1414,280 1422,300 1430,360 1438,362 1447,330 1455,160 1463,260 1472,500 1480,220 1488,100 1496,335 1505,355 1513,280 1521,267`
  }
];

const days = [97, 289, 457, 473, 665, 857, 1045, 1237, 1405, 1421, 1613];

const fibo = [
  ['261.8', 319], ['223.6', 382], ['161.8', 485], ['100.0', 587], ['61.8', 651],
  ['50.0', 670], ['38.2', 690], ['23.6', 714], ['0.0', 753]
];

const dates = [
  '11 Aug 2010', '11 Aug 20:30', '12 Aug 04:30', '12 Aug 12:30', '12 Aug 20:30', '13 Aug 04:30',
  '13 Aug 12:30', '13 Aug 20:30', '16 Aug 05:30', '16 Aug 13:30', '16 Aug 21:30', '17 Aug 05:30',
  '17 Aug 13:30', '17 Aug 21:30', '18 Aug 06:00', '18 Aug 14:00', '18 Aug 22:03', '19 Aug 06:00',
  '19 Aug 14:00', '19 Aug 22:03', '20 Aug 06:00', '20 Aug 14:00', '22 Aug 23:15', '23 Aug 07:00'
];

function line(cls, x1, y1, x2, y2) {
  return `<line class="${cls}" x1="${x1}" y1="${y1}" x2="${x2}" y2="${y2}"/>`;
}

function hline(cls, x1, x2, y) {
  return line(cls, x1, y + 0.5, x2, y + 0.5);
}

function vline(cls, x, y1, y2) {
  return line(cls, x + 0.5, y1, x + 0.5, y2);
}

function text(x, y, value, cls) {
  return `<text class="${cls || ''}" x="${x}" y="${y}" xml:space="preserve">${value}</text>`;
}

function curve(list, key, cls) {
  const points = [];
  list.forEach(b => {
    b[key].split(' ').forEach(p => {
      const [x, y] = p.split(',').map(Number);
      points.push((b.x + x / b.sx).toFixed(1) + ',' + (b.y + y / b.sy).toFixed(1));
    });
  });
  return `<polyline class="${cls}" points="${points.join(' ')}"/>`;
}

function candles() {
  let out = '';
  let i = 0;
  blocks.forEach(b => {
    b.bars.split(',').forEach(bar => {
      const [high, open, close, low] = bar.trim().split(/\s+/).map(v => Math.round(b.y + v / b.sy));
      const x = FIRST_BAR + BAR * i++;
      const top = Math.min(open, close);
      const height = Math.abs(open - close);
      out += vline('frame', x, high, low + 1);
      if (open > close && height > 1) {
        out += `<rect class="bull" x="${x - 0.5}" y="${top + 0.5}" width="2" height="${height - 1}"/>`;
      } else {
        out += `<rect x="${x - 1}" y="${top}" width="3" height="${Math.max(height, 1)}"/>`;
      }
    });
  });
  return out;
}

function verticals(right, top, bottom) {
  let out = '';
  for (let x = 37; x < right; x += 32) out += vline('grid', x, top, bottom);
  days.forEach(x => { out += vline('day', x, top, bottom); });
  return out;
}

function drawPrice() {
  const svg = document.getElementById('pricePane');
  const right = ORIGIN_X + svg.clientWidth - 40;
  const bottom = ORIGIN_Y + svg.clientHeight - 1;
  let out = verticals(right, 56, bottom);

  for (let i = 0; i < 20; i++) {
    const y = Math.round(81 + i * 36.63);
    out += hline('grid', 6, right, y);
    out += hline('frame', right, right + 3, y);
    out += text(right + 6, y + 3, (1.574 - i * 0.0015).toFixed(4));
  }

  out += hline('bid', 5, right, 467) + hline('ask', 5, right, 462);
  out += candles();
  out += curve(blocks, 'upper', 'band') + curve(blocks, 'mid', 'band') + curve(blocks, 'lower', 'band');
  out += curve(blocks, 'slow', 'slow') + curve(blocks, 'fast', 'fast');
  out += line('trend', 1310, 753, 1338, 586) + hline('trend', 1334, 1341, 585) + vline('trend', 1307, 750, 756) + vline('trend', 1311, 750, 756);

  fibo.forEach(([label, y]) => {
    out += hline('fibo', 1309, 1588, y);
    out += text(1588, y - 2, label, 'fibo-label');
  });

  out += '<path class="shift" d="M1497 56h9l-4.500 5z"/>';
  out += text(9, 67, 'GBPUSD,M30', 'symbol');
  out += text(75, 67, '1.5582 1.5595 1.5580 1.5582');

  // price tags on the scale
  out += `<rect class="ask-tag" x="${right + 2}" y="456" width="36" height="11"/>`;
  out += text(right + 6, 465, '1.5584', 'tag-text');
  out += `<rect x="${right + 2}" y="461" width="36" height="11"/>`;
  out += text(right + 6, 470, '1.5582', 'tag-text');

  out += hline('frame', 4, right + 1, 55) + hline('frame', 4, ORIGIN_X + svg.clientWidth, bottom);
  out += vline('frame', 4, 55, bottom) + vline('frame', right, 55, bottom);
  svg.innerHTML = `<g shape-rendering="crispEdges" transform="translate(${-ORIGIN_X} ${-ORIGIN_Y})">${out}</g>`;
}

function drawRsi() {
  const svg = document.getElementById('rsiPane');
  const right = ORIGIN_X + svg.clientWidth - 40;
  let out = verticals(right, 793, 1007);

  [['100', 803], ['70', 860, 857], ['50', 903, 900], ['30', 946, 943], ['0', 1004, 1006]].forEach(([label, y, grid]) => {
    if (grid) out += hline('grid', 5, right, grid);
    out += text(right + 4, y, label);
  });

  out += curve(rsiBlocks, 'rsi3', 'rsi3') + curve(rsiBlocks, 'rsi13', 'rsi13');
  out += text(9, 806, 'RSI(13) 59.2185  RSI(3) 60.1360');
  out += hline('frame', 4, ORIGIN_X + svg.clientWidth, 792) + hline('frame', 4, right + 1, 1007);
  out += vline('frame', 4, 792, 1007) + vline('frame', right, 792, 1007);
  dates.forEach((d, i) => { out += vline('frame', FIRST_BAR + i * 64, 1008, 1011); });
  svg.innerHTML = `<g shape-rendering="crispEdges" transform="translate(${-ORIGIN_X} ${-RSI_Y})">${out}</g>`;
}

function draw() {
  drawPrice();
  drawRsi();
}

document.getElementById('dates').innerHTML = dates.map(d => `<li>${d}</li>`).join('');
draw();
window.addEventListener('resize', draw);
```
